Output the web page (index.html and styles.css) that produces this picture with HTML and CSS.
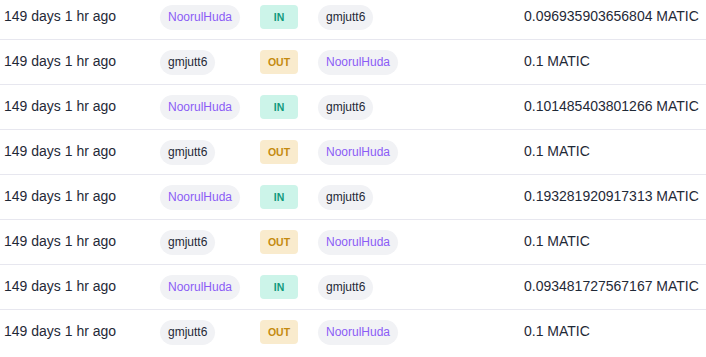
FILE: index.html
```html
<!DOCTYPE html>
<html>
<head>
<meta charset="utf-8">
<link rel="stylesheet" href="styles.css">
</head>
<body>
<div class="table">
  <div class="row">
    <div class="time">149 days 1 hr ago</div>
    <div><span class="pill name">NoorulHuda</span></div>
    <div><span class="badge in">IN</span></div>
    <div><span class="pill">gmjutt6</span></div>
    <div class="amount">0.096935903656804 MATIC</div>
  </div>
  <div class="row">
    <div class="time">149 days 1 hr ago</div>
    <div><span class="pill">gmjutt6</span></div>
    <div><span class="badge out">OUT</span></div>
    <div><span class="pill name">NoorulHuda</span></div>
    <div class="amount">0.1 MATIC</div>
  </div>
  <div class="row">
    <div class="time">149 days 1 hr ago</div>
    <div><span class="pill name">NoorulHuda</span></div>
    <div><span class="badge in">IN</span></div>
    <div><span class="pill">gmjutt6</span></div>
    <div class="amount">0.101485403801266 MATIC</div>
  </div>
  <div class="row">
    <div class="time">149 days 1 hr ago</div>
    <div><span class="pill">gmjutt6</span></div>
    <div><span class="badge out">OUT</span></div>
    <div><span class="pill name">NoorulHuda</span></div>
    <div class="amount">0.1 MATIC</div>
  </div>
  <div class="row">
    <div class="time">149 days 1 hr ago</div>
    <div><span class="pill name">NoorulHuda</span></div>
    <div><span class="badge in">IN</span></div>
    <div><span class="pill">gmjutt6</span></div>
    <div class="amount">0.193281920917313 MATIC</div>
  </div>
  <div class="row">
    <div class="time">149 days 1 hr ago</div>
    <div><span class="pill">gmjutt6</span></div>
    <div><span class="badge out">OUT</span></div>
    <div><span class="pill name">NoorulHuda</span></div>
    <div class="amount">0.1 MATIC</div>
  </div>
  <div class="row">
    <div class="time">149 days 1 hr ago</div>
    <div><span class="pill name">NoorulHuda</span></div>
    <div><span class="badge in">IN</span></div>
    <div><span class="pill">gmjutt6</span></div>
    <div class="amount">0.093481727567167 MATIC</div>
  </div>
  <div class="row">
    <div class="time">149 days 1 hr ago</div>
    <div><span class="pill">gmjutt6</span></div>
    <div><span class="badge out">OUT</span></div>
    <div><span class="pill name">NoorulHuda</span></div>
    <div class="amount">0.1 MATIC</div>
  </div>
</div>
</body>
</html>
```
FILE: styles.css
```css
html, body {
  margin: 0;
  padding: 0;
  background: #ffffff;
  overflow: hidden;
}
body {
  font-family: "Liberation Sans", Arial, sans-serif;
  color: #1f2937;
}
.table {
  margin-top: -5px;
}
.row {
  display: grid;
  grid-template-columns: 156px 100px 58px 206px 1fr;
  align-items: center;
  height: 44px;
  padding-left: 4px;
  border-bottom: 1px solid #e7e7ef;
}
.row:last-child {
  border-bottom: none;
}
.time, .amount {
  font-size: 14px;
  line-height: 20px;
  padding-bottom: 3px;
  white-space: nowrap;
}
.pill {
  display: inline-block;
  padding: 4px 8px;
  font-size: 12px;
  line-height: 17px;
  border-radius: 999px;
  background: #f1f2f5;
  color: #1f2937;
}
.pill.name {
  color: #8b5cf6;
}
.badge {
  display: inline-flex;
  align-items: center;
  justify-content: center;
  width: 38px;
  height: 24px;
  border-radius: 4px;
  font-size: 10.5px;
  font-weight: 700;
}
.badge.in {
  background: #ccf4e9;
  color: #119a7c;
}
.badge.out {
  background: #f9ebcd;
  color: #c48a0f;
}
```
